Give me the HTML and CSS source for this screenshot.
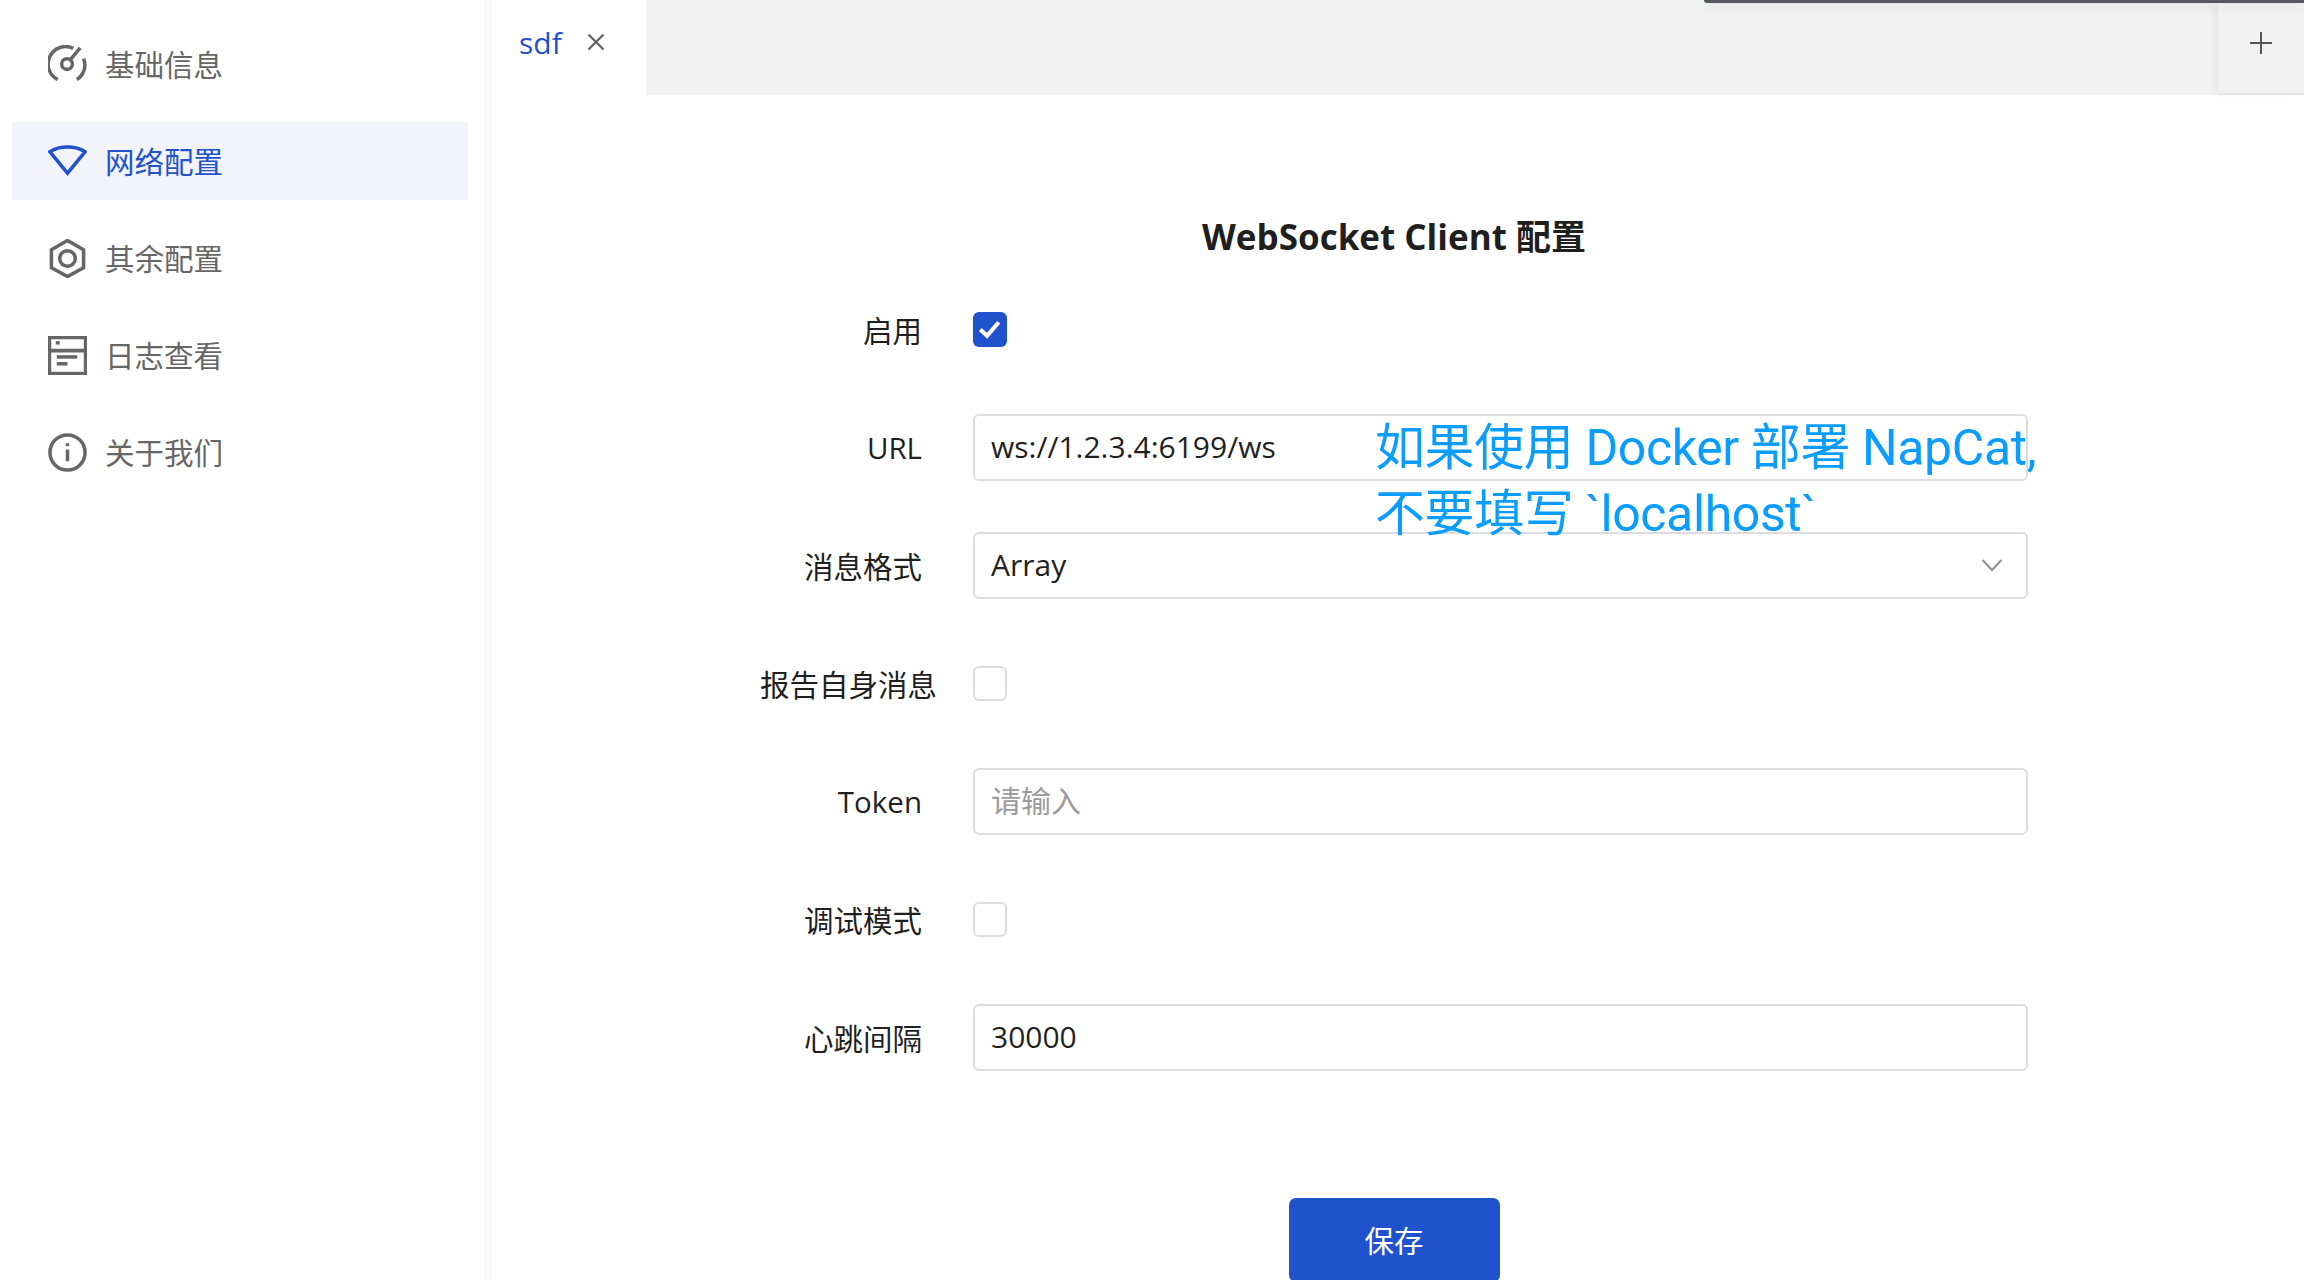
FILE: index.html
```html
<!DOCTYPE html>
<html lang="en">
<head>
    <meta charset="UTF-8">
    <meta name="viewport" content="width=device-width, initial-scale=1.0">
    <title>WebSocket Client 配置</title>
    <link rel="stylesheet" href="styles.css">
</head>
<body>
    <div class="app">
        <aside class="sidebar">
            <div class="nav-item">
                <svg class="nav-icon" viewBox="0 0 40 40"><path d="M10 35.500A17.500 17.500 0 0 1 26 3.500"/><path d="M36.500 14A17.500 17.500 0 0 1 29.500 35.500"/><circle cx="19.500" cy="19.500" r="5.500"/><path d="M23 15L33 3"/></svg>
                <span>基础信息</span>
            </div>
            <div class="nav-item active">
                <svg class="nav-icon" viewBox="0 0 40 40"><path d="M2 10C12 3.500 28 3.500 38 10L20 32Z"/></svg>
                <span>网络配置</span>
            </div>
            <div class="nav-item">
                <svg class="nav-icon" viewBox="0 0 40 40"><path d="M20 1.500L36.500 11V29.500L20 38.500L3.500 29.500V11Z"/><circle cx="20" cy="20" r="8"/></svg>
                <span>其余配置</span>
            </div>
            <div class="nav-item">
                <svg class="nav-icon" viewBox="0 0 40 40"><rect x="1.500" y="1.500" width="37" height="37"/><path d="M2 15H38"/><path d="M9 21.500H30"/><path d="M9 28.500H20"/><path d="M8 7H12"/></svg>
                <span>日志查看</span>
            </div>
            <div class="nav-item">
                <svg class="nav-icon" viewBox="0 0 40 40"><circle cx="20" cy="20" r="18"/><path d="M20 17V29"/><path d="M20 10.500V13.500"/></svg>
                <span>关于我们</span>
            </div>
        </aside>

        <main class="content">
            <div class="tab-bar">
                <div class="tab">
                    <span>sdf</span>
                    <svg class="tab-close" viewBox="0 0 18 18"><path d="M1.500 1.500L16.500 16.500M16.500 1.500L1.500 16.500"/></svg>
                </div>
                <div class="tab-fill"></div>
                <div class="tab-add">
                    <svg class="tab-plus" viewBox="0 0 24 24"><path d="M12 1V23M1 12H23"/></svg>
                </div>
                <div class="window-edge"></div>
            </div>

            <div class="form-wrap">
                <h2 class="form-title">WebSocket Client 配置</h2>
                <div class="form">
                    <div class="form-row">
                        <label class="form-label">启用</label>
                        <div class="checkbox checked">
                            <svg viewBox="0 0 34 36"><path d="M7 18L14 24.500L26 10.500"/></svg>
                        </div>
                    </div>
                    <div class="form-row">
                        <label class="form-label">URL</label>
                        <input class="form-input" type="text" value="ws://1.2.3.4:6199/ws">
                    </div>
                    <div class="form-row">
                        <label class="form-label">消息格式</label>
                        <div class="form-input form-select">
                            <span>Array</span>
                            <svg class="chevron" viewBox="0 0 22 14"><path d="M1.500 2L11 12L20.500 2"/></svg>
                        </div>
                    </div>
                    <div class="form-row">
                        <label class="form-label">报告自身消息</label>
                        <div class="checkbox"></div>
                    </div>
                    <div class="form-row">
                        <label class="form-label">Token</label>
                        <input class="form-input" type="text" placeholder="请输入">
                    </div>
                    <div class="form-row">
                        <label class="form-label">调试模式</label>
                        <div class="checkbox"></div>
                    </div>
                    <div class="form-row">
                        <label class="form-label">心跳间隔</label>
                        <input class="form-input" type="text" value="30000">
                    </div>
                </div>
                <button class="save-button">保存</button>
            </div>
        </main>
    </div>

    <div class="annotation">如果使用 Docker 部署 NapCat,<br>不要填写 `localhost`</div>
</body>
</html>
```

FILE: styles.css
```css
:root {
    --primary: #2152cd;
    --muted: #666666;
    --dark: #1f1f1f;
    --line: #dcdde3;
    --tab-bg: #f2f2f2;
}

* {
    margin: 0;
    padding: 0;
    box-sizing: border-box;
    font-family: "Open Sans", "Noto Sans CJK SC", sans-serif;
}

html, body {
    height: 100%;
    overflow: hidden;
    background: white;
}

.app {
    display: flex;
    height: 1280px;
    overflow: hidden;
}

.sidebar {
    width: 484px;
    flex-shrink: 0;
    padding: 25px 16px 0 12px;
    display: flex;
    flex-direction: column;
    gap: 19px;
}

.nav-item {
    height: 78px;
    padding-left: 36px;
    display: flex;
    align-items: center;
    gap: 18px;
    font-size: 29.500px;
    color: var(--muted);
}

.nav-item span {
    padding-bottom: 2px;
}

.nav-item.active {
    background: #f2f3fb;
    color: var(--primary);
}

.nav-icon {
    width: 39px;
    height: 39px;
    fill: none;
    stroke: var(--muted);
    stroke-width: 3.600;
}

.active .nav-icon {
    stroke: var(--primary);
}

.content {
    flex: 1;
    min-width: 0;
    border-left: 8px solid #f8f8f8;
    display: flex;
    flex-direction: column;
}

.tab-bar {
    position: relative;
    height: 95px;
    flex-shrink: 0;
    display: flex;
}

.tab {
    width: 154px;
    padding: 0 0 10px 27px;
    display: flex;
    align-items: center;
    gap: 25px;
    font-size: 30px;
    color: var(--primary);
}

.tab-close {
    width: 18px;
    height: 18px;
    margin-top: -1px;
    fill: none;
    stroke: var(--muted);
    stroke-width: 2.400;
}

.tab-fill {
    flex: 1;
    background: var(--tab-bg);
}

.tab-add {
    width: 86px;
    background: var(--tab-bg);
    border-bottom: 2px solid #e4e4e4;
    box-shadow: -8px 0 10px -4px rgba(0,0,0,0.05);
    padding-bottom: 8px;
    display: flex;
    align-items: center;
    justify-content: center;
}

.tab-plus {
    width: 24px;
    height: 24px;
    fill: none;
    stroke: #555555;
    stroke-width: 2;
}

.window-edge {
    position: absolute;
    top: 0;
    right: 0;
    left: 1212px;
    height: 3px;
    background: #55585c;
    border-bottom-left-radius: 6px;
    box-shadow: 0 4px 14px rgba(0,0,0,0.14);
}

.form-wrap {
    margin-left: -8px;
    padding-top: 117px;
    display: flex;
    flex-direction: column;
    align-items: center;
}

.form-title {
    height: 50px;
    line-height: 50px;
    font-size: 35px;
    font-weight: 700;
    color: var(--dark);
}

.form {
    width: 1268px;
    margin-top: 34px;
    display: flex;
    flex-direction: column;
    gap: 51px;
}

.form-row {
    height: 67px;
    display: flex;
    align-items: center;
    gap: 51px;
}

.form-label {
    width: 162px;
    flex-shrink: 0;
    text-align: right;
    white-space: nowrap;
    font-size: 29.500px;
    color: var(--dark);
}

.form-input {
    flex: 1;
    min-width: 0;
    height: 67px;
    padding: 0 16px 2px;
    border: 2px solid var(--line);
    border-radius: 6px;
    background: white;
    font-size: 30px;
    color: var(--dark);
    outline: none;
}

.form-input::placeholder {
    color: #9a9a9a;
}

.form-select {
    display: flex;
    align-items: center;
    justify-content: space-between;
}

.chevron {
    width: 22px;
    height: 14px;
    margin-right: 7px;
    fill: none;
    stroke: #999999;
    stroke-width: 2.400;
}

.checkbox {
    width: 34px;
    height: 35px;
    margin-top: -1px;
    border: 2px solid var(--line);
    border-radius: 6px;
    background: white;
}

.checkbox.checked {
    border: none;
    background: var(--primary);
}

.checkbox svg {
    display: block;
    width: 100%;
    height: 100%;
    fill: none;
    stroke: white;
    stroke-width: 4.200;
}

.save-button {
    width: 211px;
    height: 84px;
    margin-top: 127px;
    flex-shrink: 0;
    padding-bottom: 2px;
    border: none;
    border-radius: 7px;
    background: var(--primary);
    color: white;
    font-size: 29.500px;
    cursor: pointer;
}

.annotation {
    position: absolute;
    top: 415px;
    left: 1375px;
    font-family: Roboto, "Noto Sans CJK SC", sans-serif;
    font-size: 50px;
    line-height: 66px;
    letter-spacing: -0.400px;
    color: #0a9dff;
    white-space: nowrap;
}
```
